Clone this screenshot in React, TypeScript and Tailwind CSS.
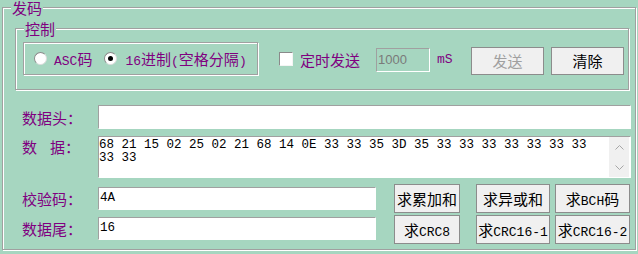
import React from "react";

const CJK_RE = /[\u3000-\u9fff\uff00-\uffef]/;

function Mixed({ text, latin, cjk }: { text: string; latin: string; cjk: string }) {
  const runs: { s: string; c: boolean }[] = [];
  for (const ch of Array.from(text)) {
    const c = CJK_RE.test(ch);
    const last = runs[runs.length - 1];
    if (last && last.c === c) last.s += ch;
    else runs.push({ s: ch, c });
  }
  return (
    <span className="whitespace-nowrap">
      {runs.map((r, i) => (
        <span key={i} className={r.c ? cjk : latin}>
          {r.s}
        </span>
      ))}
    </span>
  );
}

const CJK = "font-['Noto_Sans_CJK_SC',sans-serif] text-[15px] leading-[15px]";
const LAT = "font-['Liberation_Mono',monospace] text-[13px] leading-[15px]";

const ETCH = "border border-[#a0a0a0] shadow-[inset_1px_1px_0_#ffffff,1px_1px_0_#ffffff]";
const SUNK = "bg-white border border-t-[#a0a0a0] border-l-[#a0a0a0] border-r-white border-b-white";
const BTN = "flex items-center justify-center border border-[#8c8c8c] bg-[#f0f0f0] whitespace-nowrap";

function Label({ text }: { text: string }) {
  return (
    <div className="w-[76px] shrink-0 text-[#800080] font-['Noto_Sans_CJK_SC',sans-serif] text-[15px] leading-[15px] whitespace-nowrap">
      {text}
    </div>
  );
}

function Btn({ text, w, disabled }: { text: string; w: string; disabled?: boolean }) {
  return (
    <div className={`${BTN} ${w} ${disabled ? "text-[#a0a0a0]" : "text-black"}`}>
      <Mixed text={text} latin={LAT} cjk={CJK} />
    </div>
  );
}

export default function App() {
  return (
    <div className="w-[638px] h-[254px] bg-[#a6d6c0] overflow-hidden pt-[7px] pl-[2px]">
      {/* 发码 group */}
      <div className={`relative w-[634px] h-[243px] ${ETCH}`}>
        <span className="absolute left-[8px] top-[-7px] bg-[#a6d6c0] px-[1px] text-[#800080] font-['Noto_Sans_CJK_SC',sans-serif] text-[15px] leading-[14px]">
          发码
        </span>

        {/* 控制 group */}
        <div className={`relative ml-[12px] mt-[20px] w-[614px] h-[62px] flex items-start ${ETCH}`}>
          <span className="absolute left-[8px] top-[-8px] bg-[#a6d6c0] px-[1px] text-[#800080] font-['Noto_Sans_CJK_SC',sans-serif] text-[15px] leading-[15px]">
            控制
          </span>

          {/* radio box */}
          <div className={`ml-[7px] mt-[13px] w-[235px] h-[33px] flex items-center text-[#800080] ${ETCH}`}>
            <div className="ml-[10px] w-[13px] h-[13px] rounded-full bg-white border border-t-[#8a8a8a] border-l-[#8a8a8a] border-r-[#dcdcdc] border-b-[#dcdcdc]" />
            <div className="ml-[7px]">
              <Mixed text="ASC码" latin={LAT} cjk={CJK} />
            </div>
            <div className="ml-[12px] w-[13px] h-[13px] rounded-full bg-white border border-t-[#8a8a8a] border-l-[#8a8a8a] border-r-[#dcdcdc] border-b-[#dcdcdc] flex items-center justify-center">
              <div className="w-[5px] h-[5px] rounded-full bg-black" />
            </div>
            <div className="ml-[8px]">
              <Mixed text="16进制(空格分隔)" latin={LAT} cjk={CJK} />
            </div>
          </div>

          {/* checkbox */}
          <div className="ml-[21px] mt-[23px] w-[14px] h-[14px] bg-white border border-t-[#8a8a8a] border-l-[#8a8a8a] border-r-[#f4f4f4] border-b-[#f4f4f4]" />
          <div className={`ml-[7px] mt-[23px] text-[#800080] whitespace-nowrap ${CJK}`}>定时发送</div>

          {/* interval input */}
          <div className="ml-[16px] mt-[19px] w-[54px] h-[24px] border border-t-[#a0a0a0] border-l-[#a0a0a0] border-r-white border-b-white flex items-center pl-[1px] text-[#7a7a7a] font-['Liberation_Sans',sans-serif] text-[13px]">
            1000
          </div>
          <div className={`ml-[7px] mt-[23px] w-[34px] text-[#800080] ${LAT}`}>mS</div>

          <div className="mt-[18px] h-[28px] flex">
            <Btn text="发送" w="w-[73px]" disabled />
          </div>
          <div className="ml-[7px] mt-[18px] h-[28px] flex">
            <Btn text="清除" w="w-[73px]" />
          </div>
        </div>

        {/* data rows */}
        <div className="pl-[19px]">
          <div className="mt-[15px] flex items-center h-[24px]">
            <Label text="数据头：" />
            <div className={`w-[533px] h-[24px] ${SUNK}`} />
          </div>

          <div className="mt-[7px] flex items-start">
            <div className="w-[76px] shrink-0 mt-[3px] text-[#800080] font-['Noto_Sans_CJK_SC',sans-serif] text-[15px] leading-[15px] whitespace-nowrap">
              数<span className="ml-[13px]">据：</span>
            </div>
            <div className={`w-[533px] h-[42px] flex ${SUNK}`}>
              <div className="flex-1 pt-[2px] font-['Liberation_Mono',monospace] text-[12.5px] leading-[13px] text-black whitespace-pre">
                {"68 21 15 02 25 02 21 68 14 0E 33 33 35 3D 35 33 33 33 33 33 33 33\n33 33"}
              </div>
              <div className="w-[20px] mr-[1px] bg-[#f0f0f0] flex flex-col items-center justify-between pt-[8px] pb-[7px]">
                <svg width="9" height="5" viewBox="0 0 9 5">
                  <polyline points="0.5,4.5 4.5,0.5 8.5,4.5" fill="none" stroke="#a6a6a6" strokeWidth="1" />
                </svg>
                <svg width="9" height="5" viewBox="0 0 9 5">
                  <polyline points="0.5,0.5 4.5,4.5 8.5,0.5" fill="none" stroke="#a6a6a6" strokeWidth="1" />
                </svg>
              </div>
            </div>
          </div>

          <div className="mt-[6px] flex items-start">
            <div className="flex flex-col pt-[3px] gap-[7px]">
              <div className="flex items-center h-[23px]">
                <Label text="校验码：" />
                <div className={`w-[278px] h-[23px] flex items-center pl-[1px] font-['Liberation_Mono',monospace] text-[12.5px] text-black ${SUNK}`}>
                  4A
                </div>
              </div>
              <div className="flex items-center h-[23px]">
                <Label text="数据尾：" />
                <div className={`w-[278px] h-[23px] flex items-center pl-[1px] font-['Liberation_Mono',monospace] text-[12.5px] text-black ${SUNK}`}>
                  16
                </div>
              </div>
            </div>

            <div className="ml-[18px] flex flex-col gap-[2px]">
              <div className="flex h-[29px]">
                <Btn text="求累加和" w="w-[66px]" />
                <div className="ml-[16px] flex">
                  <Btn text="求异或和" w="w-[74px]" />
                </div>
                <div className="ml-[5px] flex">
                  <Btn text="求BCH码" w="w-[75px]" />
                </div>
              </div>
              <div className="flex h-[29px]">
                <Btn text="求CRC8" w="w-[66px]" />
                <div className="ml-[16px] flex">
                  <Btn text="求CRC16-1" w="w-[74px]" />
                </div>
                <div className="ml-[5px] flex">
                  <Btn text="求CRC16-2" w="w-[75px]" />
                </div>
              </div>
            </div>
          </div>
        </div>
      </div>
    </div>
  );
}
